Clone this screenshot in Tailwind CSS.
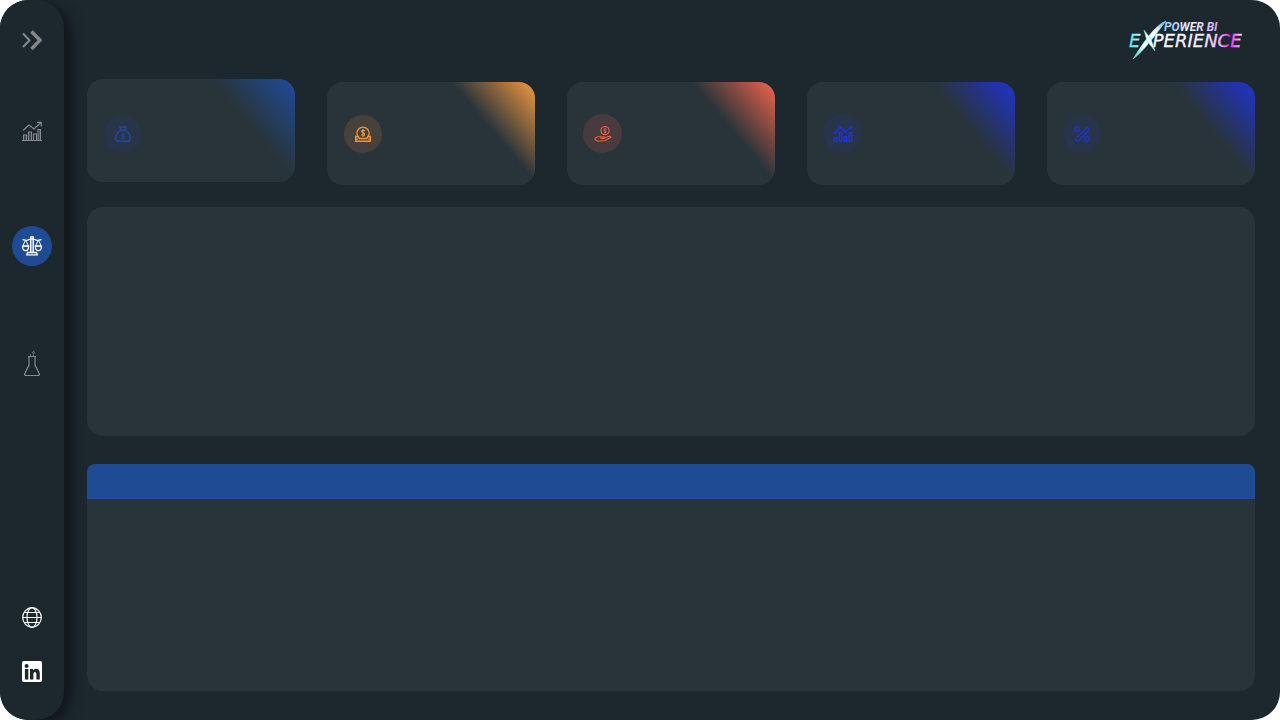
<!DOCTYPE html>
<html lang="en">
<head>
<meta charset="utf-8">
<meta name="viewport" content="width=device-width, initial-scale=1">
<title>Power BI Experience</title>
<script src="https://cdn.jsdelivr.net/npm/@tailwindcss/browser@4"></script>
</head>
<body class="bg-white font-['Liberation_Sans',sans-serif]">
<div class="flex min-h-screen overflow-hidden rounded-[28px] bg-[#1d282e]">
  <nav aria-label="Main" class="flex w-16 shrink-0 flex-col items-center rounded-[28px] bg-[#1d282e] pt-5 pb-[29px] shadow-[7px_4px_14px_-1px_#0f1317]">
    <button aria-label="Expand menu" class="flex size-10 items-center justify-center text-[#85898c]">
      <svg class="size-5" viewBox="0 0 20 20" fill="none" stroke="currentColor"><path d="M1 3.500 7.500 10.200 1 17" stroke-width="2"/><path d="M9.500 1.500 18 10.200 9.500 19" stroke-width="3.400"/></svg>
    </button>
    <a href="#performance" aria-label="Performance" class="mt-[51px] flex size-10 items-center justify-center text-[#85898c]">
      <svg class="size-5" viewBox="0 0 20 20" fill="none" stroke="currentColor"><path d="M0 19.500h20M1.500 19v-5h3v5M6.500 19v-8h3v8M11.500 19v-6h3v6M16 19V8.500h2.500V19" stroke-width="1.100"/><path d="M3 14v5M8 11v8M17.200 9v10" stroke-width=".6"/><path d="m1 9.500 6-5.500 5 4L19 1.500M15 1.300h4.200V5.500" stroke-width="1.200"/></svg>
    </a>
    <a href="#balance" aria-label="Balance" aria-current="page" class="mt-[75px] flex size-10 items-center justify-center rounded-full bg-[#1f4a94] text-white">
      <svg class="size-5" viewBox="0 0 20 20" fill="none" stroke="currentColor" stroke-width="1.300"><path d="M8.700 16V3h2.600v13M8.800 2.800V1h2.400v1.800M5.500 16.500h9l.7 2.300H4.800zM0.500 4c2-1 3 .8 5 .2L9 3M19.500 4c-2-1-3 .8-5 .2L11 3"/><path d="M10 3v13" stroke-width=".6"/><path d="M3.500 4 .9 10h5.600zM16.500 4l-3 6h5.600z" stroke-width="1"/><path d="M.6 10.200h6c0 6-6 6-6 0zm12.800 0h6c0 6-6 6-6 0z"/></svg>
    </a>
    <a href="#simulation" aria-label="Simulation" class="mt-[78px] flex size-10 items-center justify-center text-[#85898c]">
      <svg class="h-[26px] w-4" viewBox="0 0 16 26" fill="none" stroke="currentColor" stroke-width="1.200"><path d="M4 5.500h8M5 6v8L.8 22.500Q0 24.500 2.500 24.500h11q2.500 0 1.700-2L11 14V6"/><circle cx="9.500" cy="1.500" r=".9" stroke-width="1"/><circle cx="6.500" cy="3.800" r=".4" stroke-width=".8"/><circle cx="9.300" cy="4" r=".4" stroke-width=".8"/></svg>
    </a>
    <a href="#website" aria-label="Website" class="mt-auto flex size-10 items-center justify-center text-white">
      <svg class="h-[21px] w-5" viewBox="0 0 20 21" fill="none" stroke="currentColor" stroke-width="1.200"><ellipse cx="10" cy="10.500" rx="9.300" ry="9.800"/><ellipse cx="10" cy="10.500" rx="5" ry="9.800"/><path d="M.7 10.500h18.600M2.300 5.500h15.400M2.300 15.500h15.400"/></svg>
    </a>
    <a href="#linkedin" aria-label="LinkedIn" class="mt-3.5 flex size-10 items-center justify-center text-white">
      <svg class="h-[21px] w-5" viewBox="0 0 20 21"><rect width="20" height="21" rx="1.800" fill="currentColor"/><g fill="#1d282e"><circle cx="4.600" cy="4.900" r="2"/><path d="M2.900 8h3.400v10.500H2.900zM8 8h3.200v1.400c2-2.800 6.600-2 6.600 2.800v6.300h-3.400V13c0-2.700-3-2.700-3 0v5.500H8z"/></g></svg>
    </a>
  </nav>

  <main class="flex min-w-0 flex-1 flex-col pr-[25px] pb-[29px] pl-[23px]">
    <header class="flex h-[79px] items-start justify-end pt-5">
      <svg class="h-[42px] w-[126px]" viewBox="0 0 126 42" role="img" aria-label="Power BI Experience">
        <defs>
          <linearGradient id="word" x1="0" x2="1"><stop offset="0" stop-color="#43e6ea"/><stop offset=".12" stop-color="#d9ffff"/><stop offset=".3" stop-color="#fff"/><stop offset=".65" stop-color="#f7e9ff"/><stop offset=".8" stop-color="#f3b8ff"/><stop offset=".89" stop-color="#f01ff5"/><stop offset="1" stop-color="#ffe0ff"/></linearGradient>
          <linearGradient id="top" x1="0" x2="1"><stop offset="0" stop-color="#8fc4ff"/><stop offset=".5" stop-color="#e8f2ff"/><stop offset="1" stop-color="#dba0f5"/></linearGradient>
          <linearGradient id="slash" x1="1" y1="0" x2="0" y2="1"><stop offset="0" stop-color="#5e9fa8"/><stop offset=".3" stop-color="#fff"/><stop offset=".65" stop-color="#f4ffff"/><stop offset="1" stop-color="#25c9cc"/></linearGradient>
        </defs>
        <text x="35" y="11" fill="url(#top)" font-family="Roboto, sans-serif" font-size="12" font-weight="700" font-style="italic">POWER BI</text>
        <text x="0" y="27" fill="url(#word)" stroke="url(#word)" stroke-width=".3" font-family="DejaVu Sans, sans-serif" font-size="18" font-style="italic">E<tspan fill="none" stroke="none">X</tspan>PERIENCE</text>
        <path d="M37 1C25 6 15 22 4 39 15 31 27 14 37 1z" fill="url(#slash)" stroke="#8df4f6" stroke-width=".6"/>
        <path d="m15 10 7 9 4 12-8-10z" fill="#fff" stroke="#56dfe5" stroke-width=".6"/>
      </svg>
    </header>

    <section aria-label="Indicators" class="grid h-[106px] grid-cols-5 items-end gap-8">
      <article class="flex h-[103px] items-end self-start rounded-2xl bg-[linear-gradient(230deg,#1f4a94_6px,#29343a_64px)] pb-[29px] pl-[17px]">
        <div class="flex size-[38px] items-center justify-center rounded-full bg-[#283548] text-[#1f4b9e]">
          <svg class="size-4" viewBox="0 0 16 16" fill="none" stroke="currentColor" stroke-width="1.400"><path d="M6 4.200 4.500.8Q6 1.500 8 .8q2 .7 3.500 0L10 4.200zM6 4.200C3 6 .7 9 .7 12.500q0 2.700 2.700 2.700h9.200q2.700 0 2.700-2.700C15.300 9 13 6 10 4.200"/><path d="M9.600 8.700Q8 7.500 6.900 8.500q-.8 1.200 1 1.700 2 .7 1.400 1.900-1.200 1.100-3 0M8 7v6.500" stroke-width="1"/></svg>
        </div>
      </article>
      <article class="flex h-[103px] items-center rounded-2xl bg-[linear-gradient(230deg,#e0913d_6px,#29343a_64px)] pl-[17px]">
        <div class="flex size-[38px] items-center justify-center rounded-full bg-[#47413c] text-[#ef963f]">
          <svg class="size-4" viewBox="0 0 16 16" fill="none" stroke="currentColor" stroke-width="1.400"><path d="M3.200 10.800a6 6 0 1 1 9.600 0M.7 10.500h2.500l1 2h7.600l1-2h2.500v4.800H.7z"/><path d="M2 12v2M14 12v2" stroke-width="1"/><path d="M9.800 5Q8 3.500 6.800 4.800q-.6 1.400 1.200 1.900 2.200.7 1.400 2.200-1.400 1.200-3.200-.1M8 3v8" stroke-width="1.200"/></svg>
        </div>
      </article>
      <article class="flex h-[103px] items-center rounded-2xl bg-[linear-gradient(230deg,#df6049_6px,#29343a_64px)] pl-4">
        <div class="flex size-[39px] items-center justify-center rounded-full bg-[#473b3d] text-[#e9634b]">
          <svg class="h-4 w-[18px]" viewBox="0 0 18 16" fill="none" stroke="currentColor" stroke-width="1.100"><circle cx="11" cy="4.600" r="4.100"/><path d="M12.300 3.300q-1.500-.9-2.200 0-.3.900 1 1.300 1.400.5.900 1.500-1.100.8-2.300-.1M11 1.800v5.800" stroke-width=".9"/><path d="M3.500 15 1 13.500v-1.200l2.500-1.500h5q2.500 0 1.800 1.600H6.500M10.300 12l4.700-1.700q2-.2 1.800.9l-5.300 3.300-8 .8"/></svg>
        </div>
      </article>
      <article class="flex h-[103px] items-center rounded-2xl bg-[linear-gradient(230deg,#2132c2_6px,#29343a_64px)] pl-4">
        <div class="flex size-[39px] items-center justify-center rounded-full bg-[#28334c] text-[#2033cc]">
          <svg class="h-4 w-5" viewBox="0 0 20 16" fill="none" stroke="currentColor" stroke-width="1.400"><path d="m2.500 6.500 5-5 5 4 5-4"/><g fill="currentColor" stroke="none"><circle cx="2.500" cy="6.500" r="1.400"/><circle cx="7.500" cy="1.500" r="1.400"/><circle cx="12.500" cy="5.500" r="1.400"/><circle cx="17.500" cy="1.500" r="1.400"/></g><path d="M1.200 15.300v-3.500h2.500v3.500zM6.200 15.300V6.800h2.500v8.500zM11.200 15.300v-4.500h2.500v4.500zM16.200 15.300V6.800h2.500v8.500z" stroke-width="1.600"/></svg>
        </div>
      </article>
      <article class="flex h-[103px] items-center rounded-2xl bg-[linear-gradient(230deg,#2132c2_6px,#29343a_64px)] pl-4">
        <div class="flex size-[38px] items-center justify-center rounded-full bg-[#28334c] text-[#2033cc]">
          <svg class="size-4" viewBox="0 0 16 16" fill="none" stroke="currentColor" stroke-width="1.200"><circle cx="3" cy="3" r="2.400"/><circle cx="13" cy="13" r="2.400"/><path d="M2.200 12.300 12.500 2q1-.8 2.200.2 1 1.100.2 2.200L4.600 14.700q-1.200 1-2.300 0-1.100-1.200-.1-2.400z"/></svg>
        </div>
      </article>
    </section>

    <section aria-label="Chart" class="mt-[22px] flex-[229_1_0%] rounded-2xl bg-[#29343a]"></section>
    <section aria-label="Details" class="mt-7 flex-[227_1_0%] overflow-hidden rounded-t-lg rounded-b-2xl bg-[#29343a]">
      <div class="h-[35px] bg-[#1f4a94]"></div>
    </section>
  </main>
</div>
</body>
</html>
